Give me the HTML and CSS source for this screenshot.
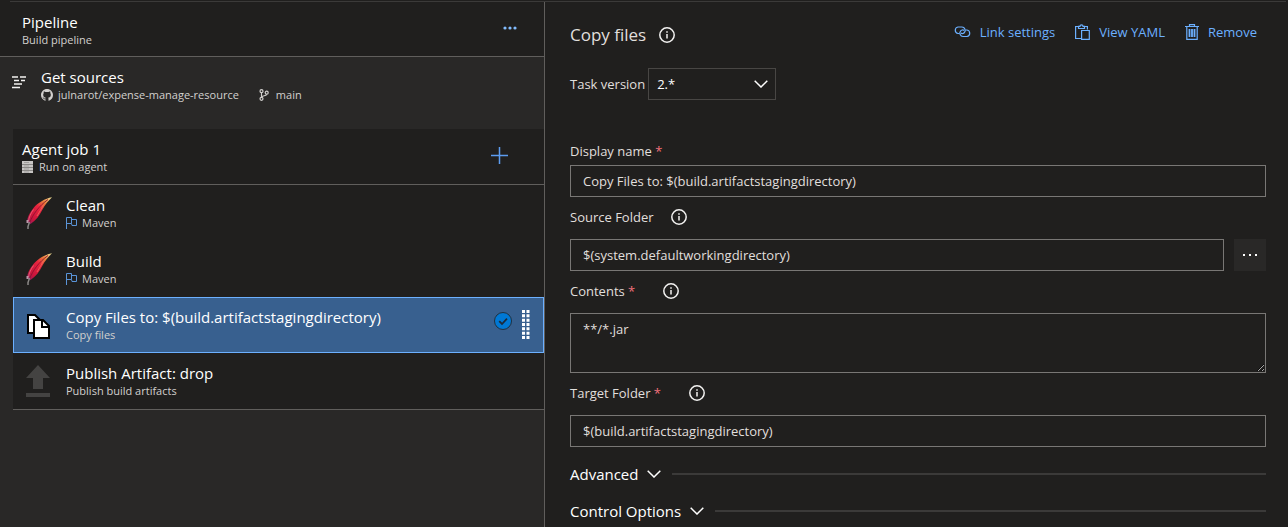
FILE: index.html
```html
<!DOCTYPE html>
<html lang="en">
<head>
<meta charset="utf-8">
<title>Build pipeline</title>
<link rel="stylesheet" href="styles.css">
</head>
<body>
<svg class="defs" aria-hidden="true">
  <defs>
    <linearGradient id="quill" x1="0" y1="1" x2="1" y2="0">
      <stop offset="0" stop-color="#7d2069"/>
      <stop offset="0.2" stop-color="#c8143c"/>
      <stop offset="0.55" stop-color="#e8253f"/>
      <stop offset="0.75" stop-color="#e8803a"/>
      <stop offset="1" stop-color="#f2e9a0"/>
    </linearGradient>
    <symbol id="feather" viewBox="0 0 28 32">
      <path d="M27 0.300C20 1.500 12.500 6 8.500 11 5 15.500 2 20.500 2.200 25L5.500 27C11 23.500 14.500 18.500 17.500 12.500 20 7.500 23.500 4 27 0.300Z" fill="url(#quill)"/>
      <path d="M4.500 26C8 17 14 9 23 2.500" fill="none" stroke="#8c1230" stroke-width="0.900"/>
      <path d="M8.500 12.500C6 16 4 20 3.500 24" fill="none" stroke="#f06a7c" stroke-width="0.800"/>
      <path d="M12 19C14.500 15.500 16 12 18.500 8" fill="none" stroke="#f06a5c" stroke-width="0.800"/>
      <path d="M4.500 25L3 29.500V32" fill="none" stroke="#8a8886" stroke-width="1.500"/>
      <path d="M2.500 23V26" fill="none" stroke="#b898a8" stroke-width="2"/>
    </symbol>
    <symbol id="flag" viewBox="0 0 11 12">
      <path d="M0.500 12V0.500H5.500V6.500H0.500M5.500 2.500H10.500V8.500H6L5.500 6.500" fill="none" stroke="#5a94d8"/>
    </symbol>
    <symbol id="info" viewBox="0 0 16 16">
      <circle cx="8" cy="8" r="7.200" fill="none" stroke="#f3f2f1" stroke-width="1.500"/>
      <path d="M8 7V11.500M8 4.300V5.700" fill="none" stroke="#f3f2f1" stroke-width="1.500"/>
    </symbol>
    <symbol id="chevron" viewBox="0 0 14 8">
      <path d="M0.700 0.800L7 7L13.300 0.800" fill="none" stroke="#ffffff" stroke-width="1.500"/>
    </symbol>
  </defs>
</svg>
<main class="editor">
  <section class="tasks">
    <header class="pipeline">
      <div>
        <h1 class="title">Pipeline</h1>
        <p class="sub">Build pipeline</p>
      </div>
      <button class="icon-button" type="button" aria-label="More actions">
        <svg width="14" height="4" viewBox="0 0 14 4" fill="#82bcff"><circle cx="2" cy="2" r="1.600"/><circle cx="7" cy="2" r="1.600"/><circle cx="12" cy="2" r="1.600"/></svg>
      </button>
    </header>
    <div class="sources">
      <svg width="15" height="13" viewBox="0 0 15 13" stroke="#f3f2f1" stroke-width="1.500" fill="none"><path d="M0 1H6M8 1H14M2 4.500H7M9 4.500H13M2 8H10M0 11.500H8"/></svg>
      <div>
        <h2 class="title">Get sources</h2>
        <div class="origin">
          <span class="sub repo"><svg width="12" height="12" viewBox="0 0 16 16" fill="#d2d0ce"><path d="M8 0C3.580 0 0 3.580 0 8c0 3.540 2.290 6.530 5.470 7.590.4.070.550-.170.550-.380 0-.190-.010-.820-.010-1.490-2.010.370-2.530-.490-2.690-.940-.090-.230-.480-.940-.820-1.130-.280-.150-.680-.520-.010-.530.630-.010 1.080.580 1.230.820.720 1.210 1.870.870 2.330.660.070-.520.280-.870.510-1.070-1.780-.200-3.640-.890-3.640-3.950 0-.870.310-1.590.820-2.150-.080-.200-.360-1.020.080-2.120 0 0 .670-.210 2.200.820.640-.180 1.320-.270 2-.270s1.360.090 2 .270c1.530-1.040 2.200-.820 2.200-.820.440 1.100.160 1.920.080 2.120.510.560.820 1.270.820 2.150 0 3.070-1.870 3.750-3.650 3.950.290.250.540.730.540 1.480 0 1.070-.010 1.930-.010 2.200 0 .210.150.460.550.380A8.010 8.010 0 0 0 16 8c0-4.420-3.580-8-8-8Z"/></svg>julnarot/expense-manage-resource</span>
          <span class="sub branch"><svg width="10" height="12" viewBox="0 0 10 12" fill="none" stroke="#d2d0ce" stroke-width="1.200"><circle cx="2.500" cy="2.200" r="1.500"/><circle cx="2.500" cy="9.800" r="1.500"/><circle cx="7.700" cy="3.700" r="1.500"/><path d="M2.500 3.700V8.300M7.700 5.200C7.700 7 3 6.500 2.500 8.300"/></svg>main</span>
        </div>
      </div>
    </div>
    <div class="job">
      <div class="job-head">
        <div>
          <h2 class="title">Agent job 1</h2>
          <p class="sub agent"><svg width="11" height="12" viewBox="0 0 11 12"><rect width="11" height="12" fill="#c8c6c4"/><path d="M0 3.500H11M0 6.500H11M0 9.500H11" stroke="#8a8886"/><path d="M2 1.500H7M2 5H7M2 8H7M2 11H7" stroke="#a19f9d"/></svg>Run on agent</p>
        </div>
        <button class="icon-button" type="button" aria-label="Add a task">
          <svg width="17" height="17" viewBox="0 0 17 17" stroke="#5c9cf0" stroke-width="1.500"><path d="M8.500 0V17M0 8.500H17"/></svg>
        </button>
      </div>
      <ul class="task-list">
        <li class="task">
          <svg class="task-icon" width="28" height="32"><use href="#feather"/></svg>
          <div><h3 class="title">Clean</h3><p class="sub maven"><svg width="11" height="12"><use href="#flag"/></svg>Maven</p></div>
        </li>
        <li class="task">
          <svg class="task-icon" width="28" height="32"><use href="#feather"/></svg>
          <div><h3 class="title">Build</h3><p class="sub maven"><svg width="11" height="12"><use href="#flag"/></svg>Maven</p></div>
        </li>
        <li class="task selected">
          <svg class="task-icon" width="28" height="26" viewBox="0 0 28 26"><path d="M3 1H10L16 7V19H3Z" fill="#fff" stroke="#000" stroke-width="2"/><path d="M9 6H18L24 12V24H9Z" fill="#fff" stroke="#000" stroke-width="2"/><path d="M17 6V13H24" fill="none" stroke="#000" stroke-width="2"/></svg>
          <div class="task-text"><h3 class="title">Copy Files to: $(build.artifactstagingdirectory)</h3><p class="sub">Copy files</p></div>
          <svg class="check" width="18" height="18" viewBox="0 0 18 18"><circle cx="9" cy="9" r="8.500" fill="#0078d4" stroke="#20303f"/><path d="M5.200 9.200L8 12L13 6.700" fill="none" stroke="#1b2a3a" stroke-width="1.800"/></svg>
          <svg class="grip" width="8" height="30" viewBox="0 0 8 30"><path d="M1.500 0V30M6 0V30" stroke="#fff" stroke-width="3" stroke-dasharray="3 1.330"/></svg>
        </li>
        <li class="task">
          <svg class="task-icon" width="28" height="32" viewBox="0 0 28 32" fill="#444342"><path d="M13 0L25 13H18V24H8V13H1ZM1 28H25V32H1Z"/></svg>
          <div><h3 class="title">Publish Artifact: drop</h3><p class="sub">Publish build artifacts</p></div>
        </li>
      </ul>
    </div>
  </section>
  <form class="details">
    <header class="details-head">
      <h2 class="details-title">Copy files <svg width="16" height="16"><use href="#info"/></svg></h2>
      <div class="actions">
        <button class="action" type="button"><svg width="17" height="12" viewBox="0 0 17 12" fill="none" stroke="#6cb0ff" stroke-width="1.200"><path d="M5.500 7.500H4A3.300 3.300 0 0 1 4 1H8A3.300 3.300 0 0 1 10.500 6.300C9.700 7.500 8 8 7 7"/><path d="M11.500 4H13A3.300 3.300 0 0 1 13 10.500H9A3.300 3.300 0 0 1 6.500 5.200C7.300 4 9 3.500 10 4.500"/></svg>Link settings</button>
        <button class="action" type="button"><svg width="15" height="16" viewBox="0 0 15 16" fill="none" stroke="#6cb0ff" stroke-width="1.200"><path d="M6 14.500H0.600V2.500H3M10 2.500H12.400V5.500M3.500 4.500V2.300H5A1.500 1.500 0 0 1 8 2.300H9.500V4.500ZM6.600 6.500H14.300V15.400H6.600Z"/></svg>View YAML</button>
        <button class="action" type="button"><svg width="14" height="16" viewBox="0 0 14 16" fill="none" stroke="#6cb0ff" stroke-width="1.200"><path d="M0 2.500H14M4.500 2.500V0.600H9.500V2.500M1.800 2.500V15.300H12.200V2.500"/><path d="M4.500 5V13M7 5V13M9.500 5V13" stroke-width="1.800"/></svg>Remove</button>
      </div>
    </header>
    <div class="version">
      <label for="version">Task version</label>
      <span class="select-wrap">
        <select id="version"><option>2.*</option></select>
        <svg class="select-arrow" width="14" height="8"><use href="#chevron"/></svg>
      </span>
    </div>
    <div class="label-row first"><label for="name">Display name <span class="req">*</span></label></div>
    <input class="box" id="name" type="text" value="Copy Files to: $(build.artifactstagingdirectory)">
    <div class="label-row"><label for="source">Source Folder</label><svg width="16" height="16"><use href="#info"/></svg></div>
    <div class="browse-row">
      <input class="box" id="source" type="text" value="$(system.defaultworkingdirectory)">
      <button class="browse" type="button" aria-label="Browse"><svg width="16" height="2" viewBox="0 0 16 2" fill="#fff"><path d="M1 0H3V2H1ZM7 0H9V2H7ZM13 0H15V2H13Z"/></svg></button>
    </div>
    <div class="label-row required"><label for="contents">Contents <span class="req">*</span></label><svg width="16" height="16"><use href="#info"/></svg></div>
    <textarea class="box area" id="contents">**/*.jar</textarea>
    <div class="label-row required"><label for="target">Target Folder <span class="req">*</span></label><svg width="16" height="16"><use href="#info"/></svg></div>
    <input class="box" id="target" type="text" value="$(build.artifactstagingdirectory)">
    <div class="groups">
      <button class="group" type="button">Advanced<svg width="14" height="8"><use href="#chevron"/></svg></button>
      <button class="group" type="button">Control Options<svg width="14" height="8"><use href="#chevron"/></svg></button>
    </div>
  </form>
</main>
</body>
</html>
```

FILE: styles.css
```css
* { box-sizing: border-box; }
body {
  margin: 0;
  background: #201f1e;
  color: #fff;
  font-family: "Open Sans", "Noto Sans", sans-serif;
  font-size: 13px;
  line-height: 20px;
  overflow: hidden;
}
h1, h2, h3, p, ul { margin: 0; padding: 0; font-weight: 400; }
ul { list-style: none; }
svg { display: block; flex: none; }
button, input, select, textarea { font: inherit; color: inherit; }
button { background: none; border: 0; padding: 0; cursor: pointer; }
.defs { position: absolute; width: 0; height: 0; }

.editor {
  display: grid;
  grid-template-columns: 545fr 743fr;
  min-height: 100vh;
  padding-top: 2px;
  background: linear-gradient(#3b3a39, #3b3a39) 10px 1px / calc(100% - 12px) 1px no-repeat;
}
.tasks { background: #292827; border-right: 1px solid #605e5c; }
.title { font-size: 15px; line-height: 20px; white-space: nowrap; }
.sub { font-size: 11px; line-height: 16px; color: #d2d0ce; white-space: nowrap; }
.icon-button { display: grid; place-items: center; width: 32px; height: 32px; }

.pipeline {
  display: flex;
  justify-content: space-between;
  background: #201f1e;
  border-bottom: 1px solid #605e5c;
  padding: 10px 18px 8px 22px;
}
.sources { display: flex; gap: 14px; height: 72px; padding: 10px 12px; }
.sources > svg { margin-top: 9px; }
.origin { display: flex; gap: 20px; }
.repo, .branch, .agent, .maven { display: flex; align-items: center; gap: 5px; }
.branch { gap: 7px; }
.agent { gap: 6px; }

.job { margin-left: 13px; background: #201f1e; border-bottom: 1px solid #605e5c; }
.job-head {
  display: flex;
  justify-content: space-between;
  height: 56px;
  padding: 10px 29px 0 9px;
  border-bottom: 1px solid #605e5c;
}
.task { display: flex; height: 56px; padding: 10px 13px 0 12px; }
.task-icon { margin: 2px 13px 0 0; }
.task.selected { background: #38608f; border: 1px solid #6cb0ff; padding: 9px 13px 0 11px; }
.selected .task-icon { margin-top: 7px; }
.task-text { flex: 1; }
.check { margin: 5px 10px 0 0; }
.grip { margin-top: 3px; }

.details { padding: 14px 22px 0 25px; color: #e1dfdd; }
.details-head { display: flex; justify-content: space-between; align-items: flex-start; }
.details-title { display: flex; align-items: center; gap: 13px; font-size: 17px; line-height: 38px; }
.actions { display: flex; gap: 20px; padding: 6px 9px 0 0; }
.action { display: flex; align-items: center; gap: 9px; color: #6cb0ff; line-height: 20px; white-space: nowrap; }

.version { display: flex; align-items: center; gap: 3px; margin-top: 14px; }
.select-wrap { position: relative; }
.select-wrap select {
  display: block;
  appearance: none;
  width: 128px;
  height: 32px;
  padding: 0 32px 0 8px;
  color: #fff;
  background: #201f1e;
  border: 1px solid #484644;
  border-radius: 0;
}
.select-arrow { position: absolute; right: 8px; top: 12px; pointer-events: none; }

.label-row { display: flex; align-items: center; gap: 17px; height: 42px; padding-bottom: 2px; }
.label-row.required { gap: 28px; }
.label-row.first { height: 28px; margin-top: 37px; padding: 0; }
.req { color: #f1707b; }
.box {
  display: block;
  width: 100%;
  height: 32px;
  padding: 0 12px;
  background: #201f1e;
  border: 1px solid #797775;
  border-radius: 0;
}
.area { height: 60px; padding-top: 5px; resize: vertical; }
.browse-row { display: flex; gap: 10px; }
.browse { display: grid; place-items: center; flex: none; width: 32px; background: #292827; }

.groups { display: grid; gap: 13px; padding-top: 15px; }
.group { display: flex; align-items: center; gap: 9px; color: #fff; font-size: 15px; line-height: 24px; white-space: nowrap; }
.group::after { content: ""; flex: 1; height: 2px; margin-left: 2px; background: #3b3a39; }
```
